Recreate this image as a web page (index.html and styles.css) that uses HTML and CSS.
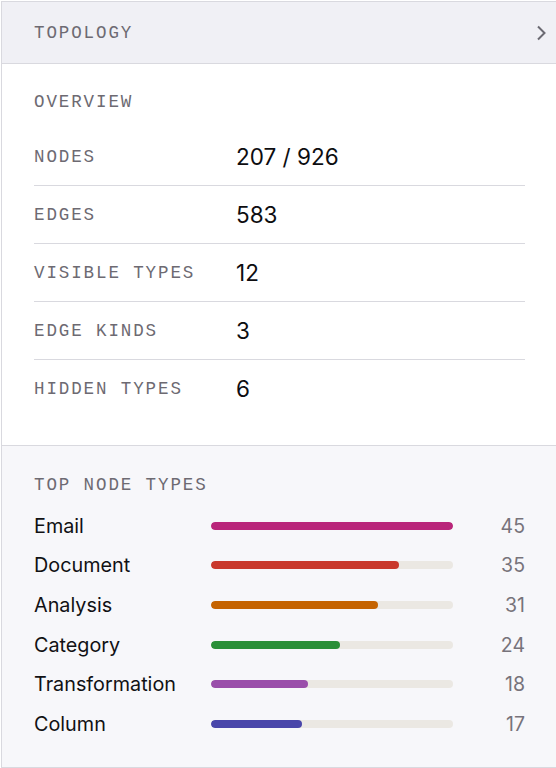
FILE: index.html
```html
<!DOCTYPE html>
<html lang="en">
<head>
<meta charset="utf-8">
<title>Topology</title>
<link rel="stylesheet" href="styles.css">
</head>
<body>
<aside class="panel">
  <header class="panel-head">
    <h2 class="caps">Topology</h2>
    <svg class="chevron" width="12" height="16" viewBox="0 0 12 16" aria-hidden="true">
      <path d="M3 1.5 L9.5 8 L3 14.5" fill="none" stroke="#6b6a72" stroke-width="2"/>
    </svg>
  </header>

  <section class="overview">
    <h3 class="caps section-title">Overview</h3>
    <dl class="stats">
      <div class="stat"><dt class="caps">Nodes</dt><dd>207 / 926</dd></div>
      <div class="stat"><dt class="caps">Edges</dt><dd>583</dd></div>
      <div class="stat"><dt class="caps">Visible types</dt><dd>12</dd></div>
      <div class="stat"><dt class="caps">Edge kinds</dt><dd>3</dd></div>
      <div class="stat"><dt class="caps">Hidden types</dt><dd>6</dd></div>
    </dl>
  </section>

  <section class="types">
    <h3 class="caps section-title">Top node types</h3>
    <ul class="type-list">
      <li class="type-row"><span class="type-name">Email</span><span class="track"><span class="fill c-email" style="width:100%"></span></span><span class="count">45</span></li>
      <li class="type-row"><span class="type-name">Document</span><span class="track"><span class="fill c-document" style="width:77.8%"></span></span><span class="count">35</span></li>
      <li class="type-row"><span class="type-name">Analysis</span><span class="track"><span class="fill c-analysis" style="width:68.9%"></span></span><span class="count">31</span></li>
      <li class="type-row"><span class="type-name">Category</span><span class="track"><span class="fill c-category" style="width:53.3%"></span></span><span class="count">24</span></li>
      <li class="type-row"><span class="type-name">Transformation</span><span class="track"><span class="fill c-transformation" style="width:40%"></span></span><span class="count">18</span></li>
      <li class="type-row"><span class="type-name">Column</span><span class="track"><span class="fill c-column" style="width:37.8%"></span></span><span class="count">17</span></li>
    </ul>
  </section>
</aside>
</body>
</html>
```

FILE: styles.css
```css
* { box-sizing: border-box; }

html, body {
  margin: 0;
  padding: 0;
  background: #ffffff;
  overflow: hidden;
}

body {
  font-family: Inter, "Noto Sans", sans-serif;
  color: #111114;
}

.panel {
  margin: 1px 0 0 1px;
  width: 557px;
  border: 1px solid #d9d9df;
  background: #ffffff;
}

.caps {
  margin: 0;
  font-family: "Liberation Mono", "DejaVu Sans Mono", monospace;
  font-weight: 400;
  font-size: 17.5px;
  letter-spacing: 1.9px;
  text-transform: uppercase;
  color: #6d6a72;
  line-height: 20px;
}

/* header bar */
.panel-head {
  height: 62px;
  display: flex;
  align-items: center;
  justify-content: space-between;
  padding: 0 8px 0 32px;
  background: #f0f0f5;
  border-bottom: 1px solid #d9d9df;
}

.chevron { display: block; margin-right: 2px; }

/* overview */
.overview {
  padding: 28px 32px 28px;
  border-bottom: 1px solid #d9d9df;
}

.section-title { margin-bottom: 16px; }

.stats { margin: 0; }

.stat {
  display: grid;
  grid-template-columns: 202px 1fr;
  align-items: center;
  height: 58px;
  width: 491px;
  border-bottom: 1px solid #d9d9df;
}

.stat:last-child {
  height: 57px;
  border-bottom: none;
}

.stat dd {
  margin: 0;
  font-size: 22.5px;
  color: #0d0d10;
}

/* top node types */
.types {
  background: #f7f7fa;
  padding: 29px 32px 23px;
}

.types .section-title { margin-bottom: 11px; }

.type-list {
  list-style: none;
  margin: 0;
  padding: 0;
  width: 491px;
}

.type-row {
  display: grid;
  grid-template-columns: 177px 242px 1fr;
  align-items: center;
  height: 39.6px;
}

.type-name {
  font-size: 19.8px;
  color: #111114;
}

.track {
  display: block;
  height: 8px;
  border-radius: 4px;
  background: #ebe8e3;
  overflow: hidden;
}

.fill {
  display: block;
  height: 100%;
  border-radius: 4px;
}

.count {
  text-align: right;
  font-size: 19.5px;
  color: #77737b;
}

.c-email { background: #b9257a; }
.c-document { background: #c9392d; }
.c-analysis { background: #c56300; }
.c-category { background: #2a8f38; }
.c-transformation { background: #9a4eaa; }
.c-column { background: #4946aa; }
```
